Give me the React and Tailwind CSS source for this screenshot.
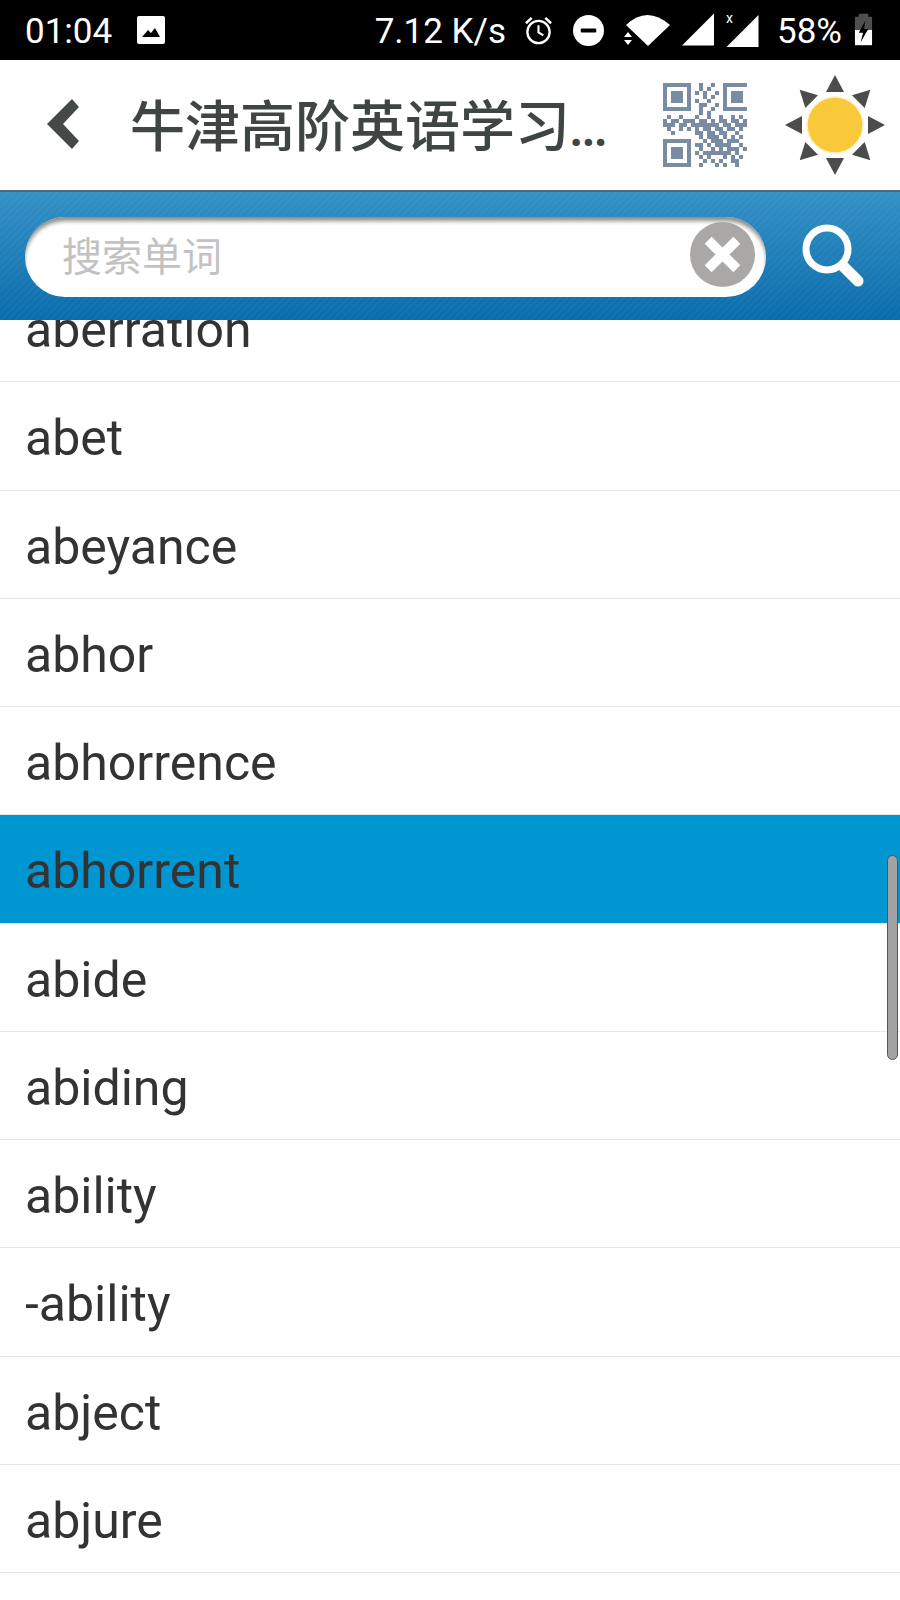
const words = [
  'abet',
  'abeyance',
  'abhor',
  'abhorrence',
  'abhorrent',
  'abide',
  'abiding',
  'ability',
  '-ability',
  'abject',
  'abjure',
]

// rough module map of the qr icon, 21 x 21
const qrRows = [
  '111111100100100111111',
  '100000100101000100000',
  '101110101010010101110',
  '101110100010100101110',
  '101110101001000101110',
  '100000100110010100000',
  '111111100100100111111',
  '000000000101000000000',
  '010010001001001001010',
  '101101110110101101101',
  '111011011111110110111',
  '010010101011011011010',
  '001000001101101100100',
  '000000000101110101010',
  '111111100010111011100',
  '100000101101011110010',
  '101110100100101011101',
  '101110101011111110100',
  '101110100101000101010',
  '100000100010101001100',
  '111111100100010100100',
]

function QrIcon() {
  return (
    <svg width="84" height="84" viewBox="0 0 21 21" fill="#7a8ca1">
      {qrRows.map((row, y) =>
        row.split('').map((cell, x) =>
          cell === '1' ? <rect key={`${x}-${y}`} x={x} y={y} width="1" height="1" /> : null
        )
      )}
    </svg>
  )
}

function SunIcon() {
  const angles = [0, 45, 90, 135, 180, 225, 270, 315]
  return (
    <svg width="100" height="100" viewBox="-50 -50 100 100">
      {angles.map((a) => (
        <polygon key={a} points="-9,-33 9,-33 0,-50" fill="#4b4d4d" transform={`rotate(${a})`} />
      ))}
      <circle r="28" fill="#f9c93a" stroke="#fdf3c8" strokeWidth="1.5" />
    </svg>
  )
}

function StatusBar() {
  return (
    <div className="h-[60px] bg-black text-white flex items-center font-['Roboto',sans-serif] text-[35px] leading-none">
      <span className="ml-[25px] mt-[3px] w-[112px]">01:04</span>
      <svg width="28" height="28" viewBox="0 0 28 28">
        <rect width="28" height="28" rx="2" fill="#fff" />
        <path d="M5 21 L11 14 L14 17 L18 12 L23 21 Z" fill="#000" />
      </svg>
      <span className="ml-auto mt-[3px]">7.12 K/s</span>
      <svg className="ml-[17px]" width="31" height="32" viewBox="0 0 32 32" fill="none" stroke="#fff">
        <circle cx="16" cy="18" r="11.5" strokeWidth="2.4" />
        <path d="M16 11 V18.5 L21 21.5" strokeWidth="2.2" />
        <path d="M3 9 L9 3.5 M29 9 L23 3.5" strokeWidth="2.6" />
      </svg>
      <svg className="ml-[19px]" width="31" height="31" viewBox="0 0 32 32">
        <circle cx="16" cy="16" r="16" fill="#fff" />
        <rect x="8" y="14" width="16" height="4" rx="1" fill="#000" />
      </svg>
      <svg className="ml-[20px]" width="46" height="34" viewBox="0 0 46 34" fill="#fff">
        <path d="M2 12 Q23 -8 46 12 L24 33 Z" />
        <path d="M0 24 L4 19 L8 24 Z M0 27 L8 27 L4 32 Z" />
      </svg>
      <svg className="ml-[12px]" width="33" height="34" viewBox="0 0 34 34" fill="#fff">
        <path d="M0 33 L33 0 V32 Q33 33 32 33 Z" />
      </svg>
      <div className="relative ml-[11px] w-[33px] h-[34px]">
        <svg className="absolute bottom-0 right-0" width="33" height="32" viewBox="0 0 32 32" fill="#fff">
          <path d="M0 32 L32 0 V32 Z" />
        </svg>
        <span className="absolute -top-[2px] left-0 text-[14px] leading-none">x</span>
      </div>
      <span className="ml-[18px] mt-[3px]">58%</span>
      <svg className="ml-[12px] mr-[27px]" width="19" height="34" viewBox="0 0 20 34">
        <path d="M5 3 V0 H15 V3 H19 V17 H1 V3 Z" fill="#4f4f4f" />
        <path d="M1 17 H19 V33 H1 Z" fill="#fff" />
        <path d="M12 7 L5 20 H9.5 L7 30 L15 16 H10.5 Z" fill="#000" />
      </svg>
    </div>
  )
}

function TopBar() {
  return (
    <header className="h-[130px] bg-white flex items-center">
      <svg className="ml-[46px] -mt-[3px]" width="34" height="50" viewBox="0 0 34 50" fill="#444948">
        <path d="M1 25 L26 0 L33 8 L17 25 L33 42 L26 50 Z" />
      </svg>
      <h1 className="ml-[50px] w-[533px] whitespace-nowrap text-[55px] leading-none font-medium text-[#3f4543] -mt-[5px] font-['Noto_Sans_CJK_SC',sans-serif]">
        牛津高阶英语学习
        <span className="font-['Open_Sans',sans-serif] font-bold text-[43px]">...</span>
      </h1>
      <div className="-mt-[1px] flex items-center">
        <QrIcon />
      </div>
      <div className="ml-[38px] -mt-[1px]">
        <SunIcon />
      </div>
    </header>
  )
}

function SearchBar() {
  return (
    <div className="h-[130px] flex items-center pl-[25px] border-t-2 border-[#4e6a80] bg-[repeating-linear-gradient(135deg,rgba(255,255,255,0.03)_0_2px,transparent_2px_5px),linear-gradient(to_bottom,#3491c5,#0a6cab)]">
      <div className="w-[741px] h-[80px] mt-[2px] rounded-full bg-white flex items-center shadow-[inset_0_5px_4px_-1px_#8f8a86]">
        <input
          className="flex-1 min-w-0 ml-[37px] -mt-[6px] bg-transparent outline-none text-[40px] text-[#333] placeholder:text-[#c2c2c2] font-['Noto_Sans_CJK_SC',sans-serif]"
          placeholder="搜索单词"
          readOnly
        />
        <svg className="mr-[11px] -mt-[6px] shrink-0" width="65" height="65" viewBox="0 0 66 66">
          <circle cx="33" cy="33" r="33" fill="#a9a8a7" />
          <path d="M22 22 L44 44 M44 22 L22 44" stroke="#fff" strokeWidth="10" strokeLinecap="square" />
        </svg>
      </div>
      <svg className="ml-[34px] -mt-[1px]" width="64" height="66" viewBox="0 0 64 66" fill="none" stroke="#fff">
        <circle cx="27" cy="26" r="21" strokeWidth="7" />
        <path d="M43 43 L58 58" strokeWidth="11" strokeLinecap="round" />
      </svg>
    </div>
  )
}

function WordRow({ word, selected, className = '' }) {
  return (
    <div
      className={`h-[108.25px] flex items-center pl-[25px] pt-[6px] text-[50px] text-[#333] border-b border-[#e6e6e6] ${
        selected ? 'bg-[#0096d2] border-[#0096d2]' : 'bg-white'
      } ${className}`}
    >
      {word}
    </div>
  )
}

export default function App() {
  return (
    <div className="w-[900px] h-[1600px] bg-white overflow-hidden flex flex-col font-['Roboto',sans-serif]">
      <StatusBar />
      <TopBar />
      <SearchBar />

      {/* Word list, scrolled so the first row sits under the search bar */}
      <div className="relative flex-1 overflow-hidden">
        <WordRow word="aberration" className="-mt-[46px]" />
        {words.map((w) => (
          <WordRow key={w} word={w} selected={w === 'abhorrent'} />
        ))}
        <div className="absolute left-[887px] top-[535px] w-[11px] h-[205px] rounded-full bg-[#a3a3a3] border border-[#555]" />
      </div>
    </div>
  )
}
